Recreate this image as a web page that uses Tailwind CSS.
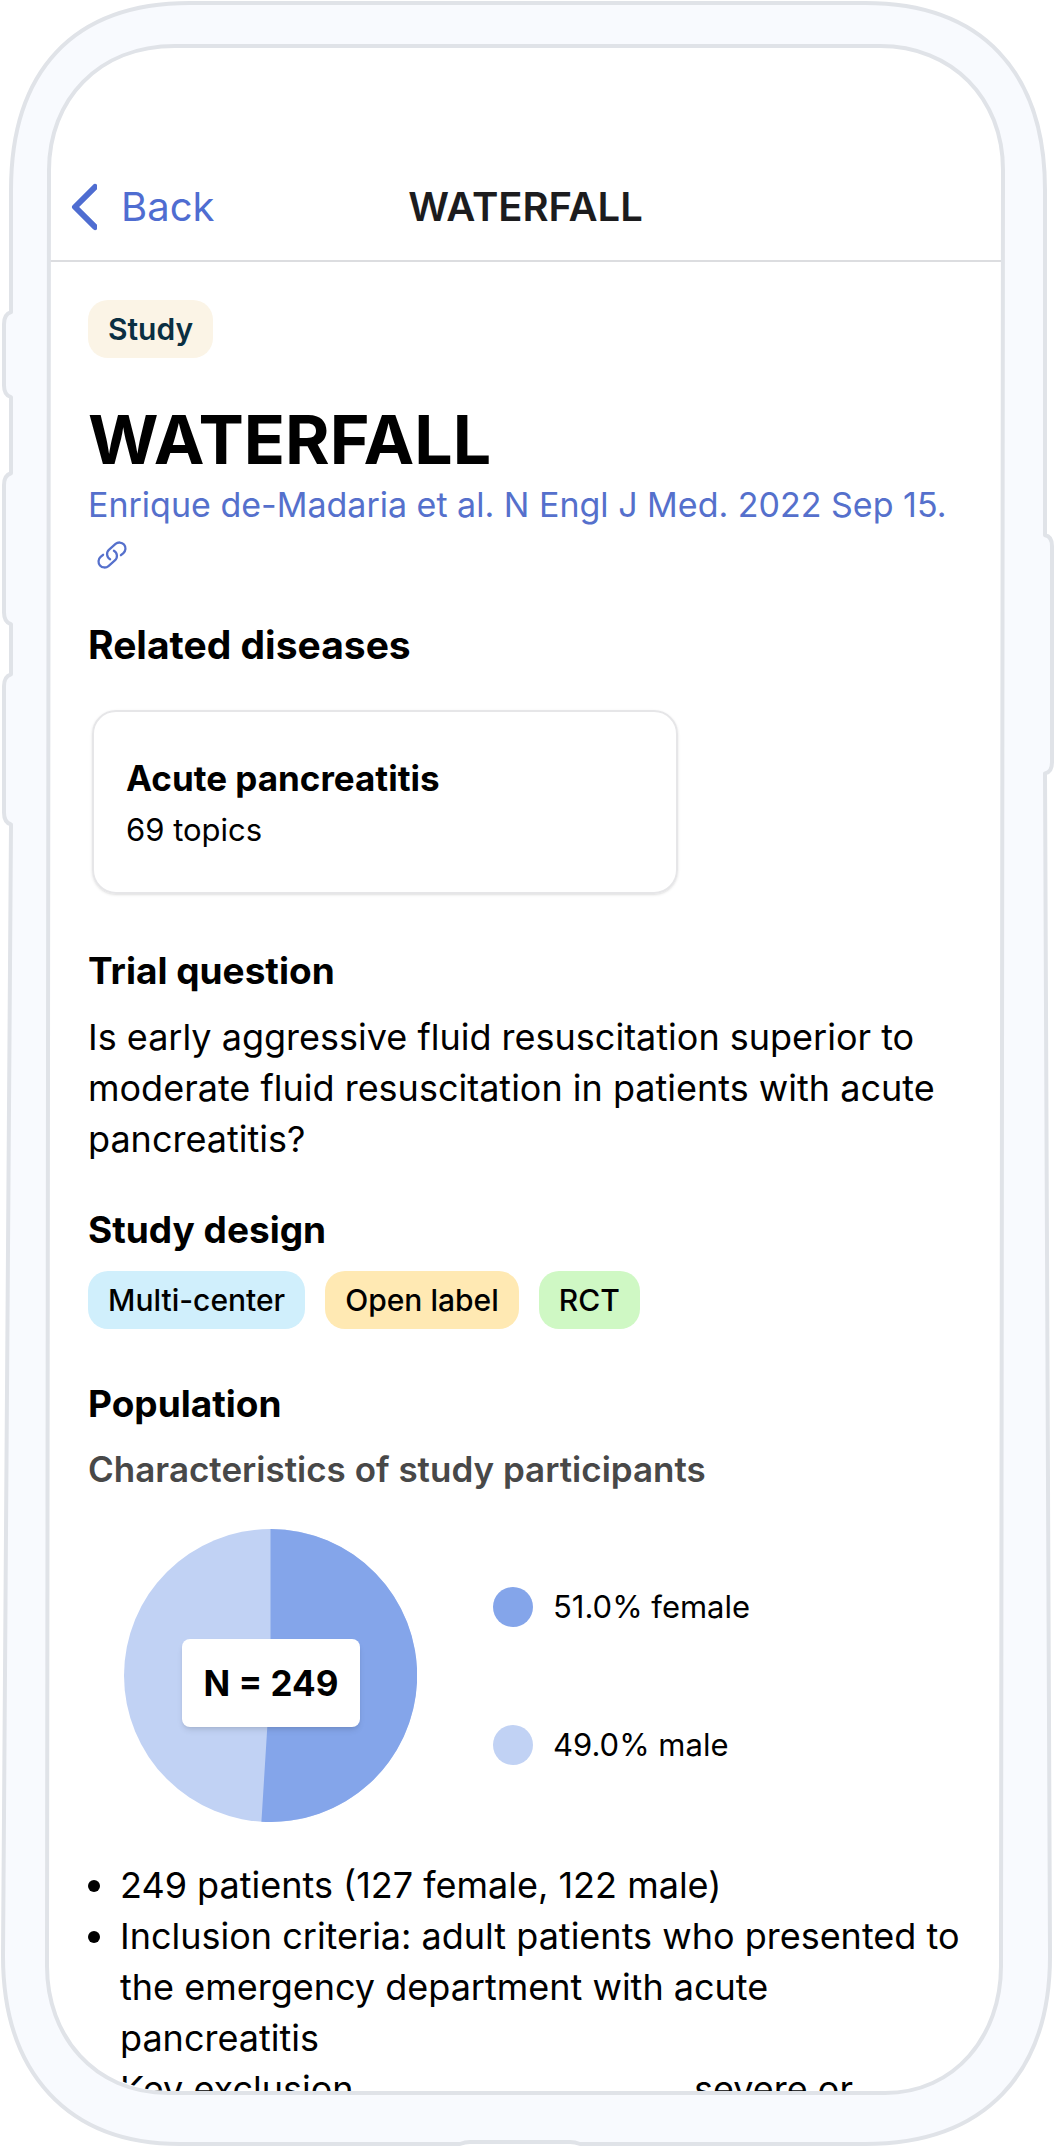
<!DOCTYPE html>
<html lang="en">
<head>
    <meta charset="UTF-8">
    <meta name="viewport" content="width=device-width, initial-scale=1.0">
    <title>WATERFALL</title>
    <script src="https://cdn.jsdelivr.net/npm/@tailwindcss/browser@4"></script>
</head>
<body class="bg-white font-['Inter',sans-serif] text-black">
    <div class="relative min-h-screen overflow-hidden px-[49px] pt-12 pb-14">

        <!-- Screen -->
        <div class="h-[2043px] overflow-hidden rounded-b-[120px]">
            <header class="grid h-[214px] grid-cols-3 items-center border-b-2 border-[#dcdde0] pt-[104px] pr-1">
                <button type="button" class="flex items-center gap-6 pl-5 text-[40px] leading-[110px] text-[#4f6dd1]">
                    <svg class="h-12 w-7" viewBox="0 0 28 48" fill="none" stroke="currentColor" stroke-width="6" stroke-linecap="round" stroke-linejoin="round">
                        <path d="M26 4 L6 24 L26 44" />
                    </svg>
                    Back
                </button>
                <div class="text-center text-[40px] font-semibold text-[#1c1c1e]">WATERFALL</div>
            </header>

            <main class="px-[39px] pt-[38px]">
                <span class="inline-flex h-[58px] items-center rounded-[20px] bg-[#fbf4e6] px-5 text-[30px] font-semibold text-[#0a2f42]">Study</span>

                <h1 class="mt-10 text-[68px] leading-[82px] font-bold">WATERFALL</h1>
                <a href="#" class="block text-[34px] leading-[50px] text-[#5570cc]">
                    Enrique de-Madaria et al. N Engl J Med. 2022 Sep 15.
                    <svg class="ml-2 block h-[50px] w-8" viewBox="0 0 24 24" fill="none" stroke="currentColor" stroke-width="1.7" stroke-linecap="round" stroke-linejoin="round">
                        <path d="M13.19 8.688a4.5 4.5 0 0 1 1.242 7.244l-4.5 4.5a4.5 4.5 0 0 1-6.364-6.364l1.757-1.757m5.485 3a4.5 4.5 0 0 1-1.242-7.244l4.5-4.5a4.5 4.5 0 0 1 6.364 6.364l-1.757 1.757" transform="rotate(4 12 12)" />
                    </svg>
                </a>

                <h2 class="mt-10 text-[39px] leading-[50px] font-bold">Related diseases</h2>
                <a href="#" class="mt-10 ml-1 block w-[586px] rounded-3xl border-2 border-[#e6e6e8] px-8 pt-10 pb-9 shadow-sm">
                    <div class="text-[35px] leading-[52px] font-bold">Acute pancreatitis</div>
                    <div class="text-[31px] leading-[52px]">69 topics</div>
                </a>

                <h2 class="mt-[52px] text-[37px] leading-[50px] font-bold">Trial question</h2>
                <p class="mt-4 text-[36px] leading-[51px]">Is early aggressive fluid resuscitation superior to moderate fluid resuscitation in patients with acute pancreatitis?</p>

                <h2 class="mt-10 text-[37px] leading-[50px] font-bold">Study design</h2>
                <div class="mt-4 flex gap-5 text-[30px] font-medium">
                    <span class="flex h-[58px] items-center rounded-[20px] bg-[#d0effc] px-5">Multi-center</span>
                    <span class="flex h-[58px] items-center rounded-[20px] bg-[#ffe9b3] px-5">Open label</span>
                    <span class="flex h-[58px] items-center rounded-[20px] bg-[#cff8c4] px-5">RCT</span>
                </div>

                <h2 class="mt-[50px] text-[37px] leading-[50px] font-bold">Population</h2>
                <h3 class="mt-4 text-[35px] leading-[48px] font-semibold text-[#484848]">Characteristics of study participants</h3>

                <div class="mt-9 ml-9 flex items-center gap-[76px]">
                    <div class="relative size-[293px]">
                        <svg class="size-full" viewBox="-50 -50 100 100">
                            <circle r="50" fill="#c1d2f4" />
                            <path d="M0 0 V-50 A50 50 0 1 1 -3.1 49.9 Z" fill="#84a5ea" />
                        </svg>
                        <div class="absolute top-[110px] left-[58px] flex h-[88px] w-[178px] items-center justify-center rounded-lg bg-white text-[35px] font-bold shadow-md">N = 249</div>
                    </div>
                    <ul class="flex flex-col gap-[90px] text-[31px] leading-[48px]">
                        <li class="flex items-center gap-5"><span class="size-10 rounded-full bg-[#84a5ea]"></span>51.0% female</li>
                        <li class="flex items-center gap-5"><span class="size-10 rounded-full bg-[#c1d2f4]"></span>49.0% male</li>
                    </ul>
                </div>

                <ul class="mt-[38px] text-[36px] leading-[51px]">
                    <li class="flex gap-5"><span class="mt-5 size-3 shrink-0 rounded-full bg-black"></span>249 patients (127 female, 122 male)</li>
                    <li class="flex gap-5"><span class="mt-5 size-3 shrink-0 rounded-full bg-black"></span>Inclusion criteria: adult patients who presented to the emergency department with acute pancreatitis</li>
                    <li class="flex justify-between pr-[114px] pl-8"><span>Key exclusion</span><span>severe or</span></li>
                </ul>
            </main>
        </div>

        <!-- Phone frame -->
        <svg class="pointer-events-none absolute inset-0 size-full" viewBox="0 0 1055 2146" preserveAspectRatio="none" fill="none" stroke="#e0e3e8" stroke-width="4" stroke-linejoin="round" aria-hidden="true">
            <path fill="#f8fafe" fill-rule="evenodd" d="M190 3 H865 C982 3 1045 72 1045 190 V535 Q1052 536 1052 546 V762 Q1052 772 1045 773 L1050 1955 C1050 2072 985 2143 865 2143 H580 Q575 2141 570 2141 H470 Q465 2141 460 2143 H180 C68 2143 3 2072 3 1955 L11 824 Q4 822 4 812 V686 Q4 676 11 674 V624 Q4 622 4 612 V485 Q4 475 11 473 V397 Q4 395 4 385 V324 Q4 314 11 312 V190 C11 72 72 3 190 3 Z
                M175 46 C98 46 49 100 49 170 L47 1965 C47 2035 94 2092 168 2092 H885 C955 2092 1001 2035 1001 1965 L1003 170 C1003 98 952 46 880 46 Z" />
        </svg>
    </div>
</body>
</html>
